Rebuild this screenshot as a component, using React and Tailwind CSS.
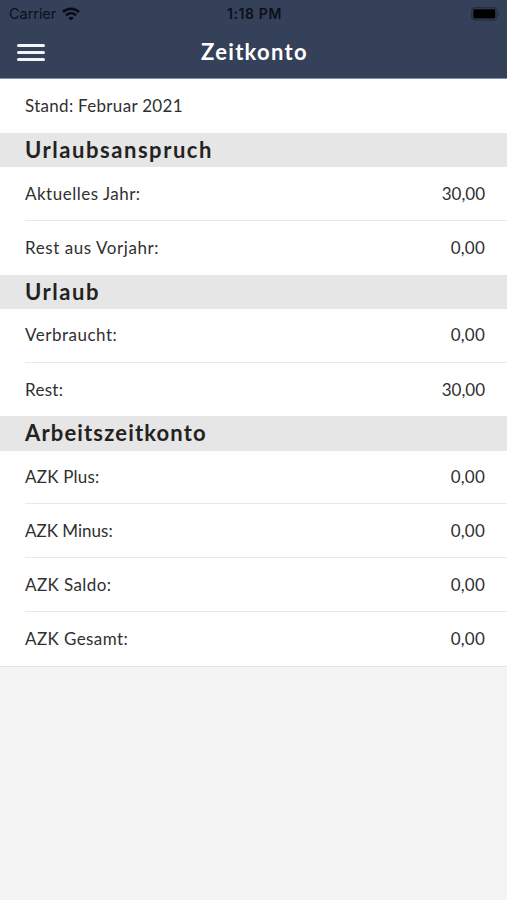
import React from "react";

const sections = [
  {
    title: "Urlaubsanspruch",
    titleClass: "tracking-[1.55px]",
    rows: [
      { label: "Aktuelles Jahr:", value: "30,00", labelClass: "tracking-[0.5px]", valueClass: "tracking-[0px]" },
      { label: "Rest aus Vorjahr:", value: "0,00", labelClass: "tracking-[0.57px]" },
    ],
  },
  {
    title: "Urlaub",
    titleClass: "tracking-[1.55px]",
    rows: [
      { label: "Verbraucht:", value: "0,00", labelClass: "tracking-[0.5px]" },
      { label: "Rest:", value: "30,00", labelClass: "tracking-[0.3px]", valueClass: "tracking-[0px]" },
    ],
  },
  {
    title: "Arbeitszeitkonto",
    titleClass: "tracking-[1.15px]",
    rows: [
      { label: "AZK Plus:", value: "0,00", labelClass: "tracking-[0.2px]" },
      { label: "AZK Minus:", value: "0,00", labelClass: "tracking-[0px]" },
      { label: "AZK Saldo:", value: "0,00", labelClass: "tracking-[0.4px]" },
      { label: "AZK Gesamt:", value: "0,00", labelClass: "tracking-[0.4px]" },
    ],
  },
];

const WifiIcon = () => (
  <svg width="18" height="14" viewBox="0 0 18 14" fill="none" stroke="#080b12" strokeWidth="2.5">
    <path d="M1 5C5.5 0.7 12.5 0.7 17 5" />
    <path d="M4 8.3C6.9 5.6 11.1 5.6 14 8.3" />
    <path d="M9 13.6L6.2 10.9C7.8 9.4 10.2 9.4 11.8 10.9Z" fill="#080b12" stroke="none" />
  </svg>
);

const BatteryIcon = () => (
  <svg width="29" height="14" viewBox="0 0 29 14">
    <rect x="0.7" y="0.7" width="25.2" height="12.4" rx="3.6" fill="none" stroke="#252e42" strokeWidth="1.2" />
    <rect x="2.3" y="2.3" width="22" height="9.2" rx="1.4" fill="#000" />
    <path d="M27.2 4.8C28.8 5.3 28.8 8.5 27.2 9Z" fill="#252e42" />
  </svg>
);

const StatusBar = () => (
  <div className="grid h-[27px] grid-cols-3 items-center pl-[9px] pr-[7px] font-['Inter',sans-serif] text-[#0c1019]">
    <div className="flex items-center gap-[6px]">
      <span className="text-[14.5px] tracking-[-0.05px]">Carrier</span>
      <WifiIcon />
    </div>
    <span className="text-center text-[14px] font-semibold tracking-[0.6px]">1:18 PM</span>
    <div className="flex justify-end">
      <BatteryIcon />
    </div>
  </div>
);

const Row = ({ label, value, labelClass, valueClass = "tracking-[0.2px]", last }) => (
  <div className="h-[53.75px] pl-[25px]">
    <div className={`flex h-full items-center justify-between pr-[22px] ${last ? "" : "border-b border-[#e9e9e9]"}`}>
      <span className={labelClass}>{label}</span>
      <span className={valueClass}>{value}</span>
    </div>
  </div>
);

const App = () => {
  return (
    <div className="min-h-screen bg-[#f4f4f4] font-['Lato',sans-serif] text-[17px] text-[#303030]">
      <header className="h-[79px] border-b border-[#8390ac] bg-[#354059]">
        <StatusBar />
        <div className="grid h-[51px] grid-cols-3 items-center pl-[17px] pr-[17px]">
          <button className="flex w-[28px] flex-col gap-[4px]" aria-label="Menü">
            <span className="h-[3px] w-full rounded-full bg-[#f2f5fa]" />
            <span className="h-[3px] w-full rounded-full bg-[#f2f5fa]" />
            <span className="h-[3px] w-full rounded-full bg-[#f2f5fa]" />
          </button>
          <h1 className="pb-[2px] pl-[2px] text-center text-[22px] font-bold tracking-[1.3px] text-white">Zeitkonto</h1>
        </div>
      </header>

      <main className="border-b border-[#e2e2e2] bg-white">
        <Row label="Stand: Februar 2021" labelClass="tracking-[0.3px]" last />
        {sections.map((section) => (
          <section key={section.title}>
            <h2 className="flex h-[34.3px] items-center bg-[#e6e6e6] pb-[1px] pl-[25px] text-[22px] font-bold text-[#222]">
              <span className={section.titleClass}>{section.title}</span>
            </h2>
            {section.rows.map((row, index) => (
              <Row key={row.label} {...row} last={index === section.rows.length - 1} />
            ))}
          </section>
        ))}
      </main>
    </div>
  );
};

export default App;
